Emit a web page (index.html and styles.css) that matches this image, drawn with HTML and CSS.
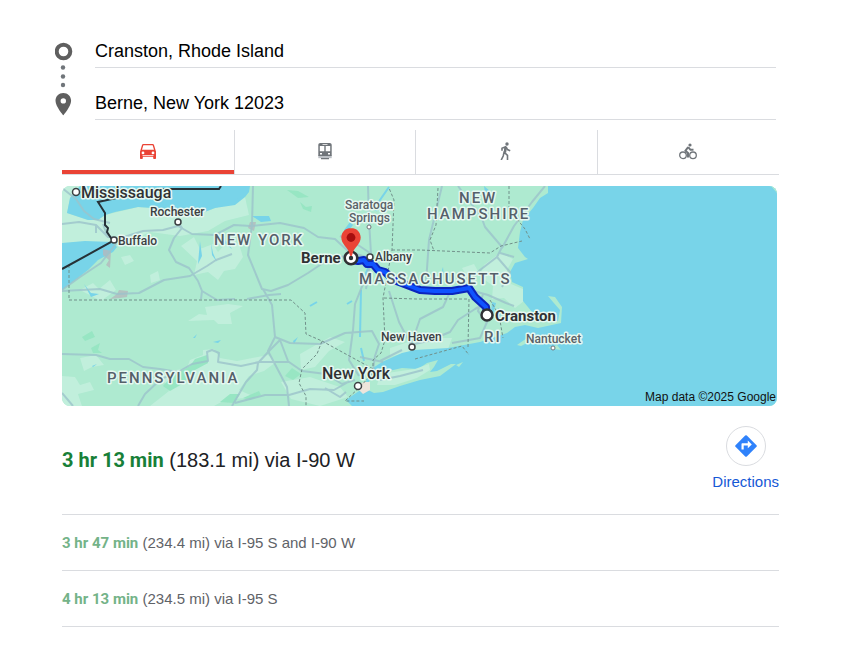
FILE: index.html
```html
<!DOCTYPE html>
<html lang="en">
<head>
<meta charset="utf-8">
<meta name="viewport" content="width=device-width, initial-scale=1">
<title>Directions</title>
<link rel="stylesheet" href="styles.css">
</head>
<body>
<main class="page">
  <form class="places">
    <svg class="trail" width="18" height="76" viewBox="0 0 18 76" aria-hidden="true">
      <circle cx="8.5" cy="9.5" r="6.8" fill="none" stroke="#5f5f5f" stroke-width="4"/>
      <g fill="#70757a"><circle cx="8" cy="25.500" r="2.200"/><circle cx="8" cy="34.500" r="2.200"/><circle cx="8" cy="43" r="2.200"/></g>
      <path fill="#5f5f5f" fill-rule="evenodd" d="M8.300 51C3.900 51 .5 54.400.5 58.700c0 5.600 7.800 14.600 7.800 14.600s7.800-9 7.800-14.600C16.100 54.400 12.700 51 8.300 51zm0 5.200a2.700 2.700 0 1 1 0 5.400 2.700 2.700 0 0 1 0-5.400z"/>
    </svg>
    <div class="fields">
      <input class="place" type="text" aria-label="Starting point" value="Cranston, Rhode Island">
      <input class="place" type="text" aria-label="Destination" value="Berne, New York 12023">
    </div>
  </form>

  <nav class="modes">
    <button class="mode mode-active" type="button" aria-label="Driving">
      <svg width="18" height="18" viewBox="0 0 18 18"><path fill="currentColor" fill-rule="evenodd" d="M4.300 2h9.400c.7 0 1.100.4 1.300 1l1.500 5 .5 1.400V16c0 .6-.4 1-1 1h-.8c-.6 0-1-.4-1-1v-1.300H3.800V16c0 .6-.4 1-1 1H2c-.6 0-1-.4-1-1V9.400L1.500 8 3 3c.2-.6.6-1 1.300-1zm.5 1.300c-.3 0-.5.1-.6.400L3 7.700h12l-1.200-4c-.1-.3-.3-.4-.6-.4zM4 9.500a1.400 1.400 0 1 0 0 2.800 1.400 1.400 0 0 0 0-2.800zm10 0a1.400 1.400 0 1 0 0 2.800 1.400 1.400 0 0 0 0-2.800zM3.500 13v.7h11V13z"/></svg>
    </button>
    <button class="mode" type="button" aria-label="Transit">
      <svg width="18" height="18" viewBox="0 0 18 18"><path fill="#bdc1c6" d="M2.300 13h13.400v3.200H2.300z"/><path fill="currentColor" fill-rule="evenodd" d="M4.300 1h9.400c1.200 0 2 .8 2 2v11H2.300V3c0-1.200.8-2 2-2zM6.500 1.900v.8h5v-.8zM3.800 4v5.300h4.500V4zm5.900 0v5.300h4.500V4zM4 11v1.500h2V11zm8 0v1.500h2V11zM5 16h8v1.200H5z"/></svg>
    </button>
    <button class="mode" type="button" aria-label="Walking">
      <svg width="18" height="18" viewBox="0 0 18 18"><g fill="none" stroke="currentColor" stroke-width="1.600"><path d="M5 8.800V6.200L8.500 4.800 7.500 10.500l3 2.800V18M7.300 9.500 6.200 14 4.200 18M9.200 5.200 10.500 7.600 13.200 8.800"/><path stroke-width="2.500" d="M8.700 5.200 7.900 10.600"/></g><circle cx="10" cy="2" r="1.700" fill="currentColor"/></svg>
    </button>
    <button class="mode" type="button" aria-label="Cycling">
      <svg width="18" height="18" viewBox="0 0 18 18"><g fill="none" stroke="currentColor"><circle cx="4" cy="13.300" r="3.300" stroke-width="1.300"/><circle cx="14" cy="13.300" r="3.300" stroke-width="1.300"/><path stroke-width="2" d="M9.200 5 6.500 8.700 9 11v4.500M9.200 5.200 11.500 7.800h3"/></g><circle cx="11" cy="3" r="1.600" fill="currentColor"/></svg>
    </button>
  </nav>

  <svg class="map" viewBox="62 186 715 220" preserveAspectRatio="xMidYMid slice" role="img" aria-label="Route map">
    <rect class="land" x="62" y="186" width="715" height="220"/>
    <g class="pale">
      <path d="M62 186H80L70 198 67 213 88 220 98 220 105 215 138 207 168 209 185 215 202 213 245 197 249 215 225 221 208 231 180 236 150 232 133 240 112 242 62 243z"/>
      <path d="M181 246 194 237 200 249 213 244 218 252 228 241 239 244 243 257 235 269 224 271 218 280 208 272 194 275 197 261zM205 307 228 304 243 306 230 313 232 324 218 324 214 320 188 321 199 314 207 315zM62 376 75 377 80 385 90 382 94 390 78 394 82 406H62zM80 358 96 355 104 365 92 367 84 371zM161 376 171 371 187 368 190 360 203 355 203 350 214 349 220 358 237 361 268 355 276 362 264 371 249 376 239 390 255 397 225 400 214 406 150 406 169 391zM300 354 330 337 345 342 329 351 315 367 301 370zM281 382 310 377 340 387 348 397 320 406 291 399zM390 348 420 338 452 338 448 349 415 350 390 357z"/>
      <path d="M484 265 500 253 513 259 507 270 511 284 523 289 524 301 515 308 504 298 492 299 493 286 480 276zM462 268 474 264 479 273 468 278z"/>
      <path d="M80 290 93 283 99 289 110 280 116 290 101 301zM121 257 130 255 134 261 125 265zM150 275 158 271 160 280 151 283z"/>
    </g>
    <g class="forest">
      <path d="M82 337 92 331 95 337 85 341zM91 348 100 343 98 350 102 353 93 353zM171 377 190 366 195 359 207 355 208 363 195 370 184 383 170 391 163 386zM220 402 230 394 240 394 234 403zM285 376 292 368 301 374 293 380zM243 398 259 391 261 395 250 400zM287 190 298 191 309 197 298 198zM300 202 306 207 312 206 311 212 303 209z"/>
    </g>
    <g class="water">
      <path d="M70 198 67 213 88 220 98 220 105 215 115 212 138 207 168 209 185 215 202 213 215 208 235 205 245 197 249 192 250 186H80z"/>
      <path d="M62 243 85 241 112 242 117 247 113 252 98 260 88 270 75 280 62 290z"/>
      <path d="M777 186H548V193L540 198 533 208 523 220 520 232 518 248 525 257 528 259 515 263 510 272 512 282 523 287 523 301 532 312 541 322 558 321 560 310 553 302 548 296 555 297 562 307 561 323 538 328 525 325 515 327 507 333 480 342 448 348 415 350 402 353 382 362 373 368 368 375 364 388 356 393 346 400 352 406H777z"/>
      <path d="M252 216 269 216 271 221 261 222zM344 230 350 222 353 225 346 234zM200 241 202 256 198 264zM211 243 213 253 217 262 212 255zM221 236 228 243 232 249 224 243zM84 284 91 293 99 294 91 297zM235 188 244 186 248 192 241 197 235 199zM293 341 298 337 294 344zM193 338 197 334 195 338zM213 342 221 340 218 343zM92 366 97 364 93 367zM443 267 444 278 442 270zM484 186 491 192 492 197 485 193z"/>
      <path d="M492 302 496 303 493 315 491 314zM498 308 501 310 500 319 497 316z"/>
    </g>
    <g class="stream"><path d="M389 187 380 200 376 211M361 290 360 337M361 348 364 361M372 260 365 275 364 282M310 306 317 302M347 304 352 301"/></g>
    <g class="land">
      <path d="M366 389 370 379 380 373 402 368 418 369 427 363 438 360 434 367 430 372 437 371 451 364 456 364 440 376 420 380 400 386 383 392 374 393zM456 365 463 362 459 367zM517 345 527 338 533 340 521 346zM548 348 557 345 561 350zM771 186H777V193z"/>
    </g>
    <path class="pale" d="M377 385 380 374 415 369 429 364 430 370 417 378 395 385z"/>
    <path fill="#eee5dc" d="M357 388 363 382 370 382 370 390 363 394z"/>
    <g fill="#b4b9bd" opacity=".8"><path d="M103 249 111 251 110 268 106 265 109 260 103 255zM110 299 117 294 119 290 128 291 127 297 120 298zM250 222 256 222 254 231 248 228z"/></g>
    <g class="road">
      <path d="M62 224 79 222 96 225 108 237 121 238 143 231 163 230 178 226 192 234 215 235 234 225 251 226 280 223 304 228 318 237 335 239 349 252 370 258"/>
      <path d="M62 188 76 199 84 211 94 219 110 223M62 290 80 277 101 263 111 250 118 241M62 291 100 289 117 294 139 293 164 280 190 276 207 266 216 260 232 254"/>
      <path d="M178 222 182 228 174 238 169 250 176 262 189 268 198 281 202 291 217 300 235 299M247 299 269 295 281 294M253 186 252 225 248 255 262 289 271 291 288 285 308 273 323 263 350 254"/>
      <path d="M263 289 272 305 275 337 268 351 287 387 289 406M275 337 290 343 320 344 345 333 372 331 379 344 375 356 373 370M372 262 363 284 355 304 353 330 349 360 359 376"/>
      <path d="M368 186 369 220 371 254 366 289M370 253 355 243 340 236M62 354 96 355 110 359 129 359 143 367 160 369 178 372 192 364 208 361 207 352 212 350 219 353 218 362 241 366 259 362 289 362 302 371 326 374 342 384 355 380M62 393 73 406M138 406 145 394 161 379 178 372M202 291 201 299M232 406 246 382 257 370 258 363 270 350 280 340 288 361M235 403 265 395 289 395 310 389 334 390 350 381"/>
      <path d="M372 261 393 280 420 290 462 291 480 270 497 257 502 247 485 227 481 216 469 201 458 186M502 248 514 226 532 202 545 186M389 291 399 322 411 345M410 345 428 341 450 332 458 320 475 309 486 303M411 345 420 319 443 307 450 292M402 350 380 361M442 186 429 240 426 283M497 257 510 272 502 287M500 253 514 257M483 294 478 311 487 322 480 338 452 343M470 290 488 295 506 303 514 306"/>
      <path d="M325 388 340 397 346 392M380 380 400 376 423 370M383 362 360 357M96 225 96 233M103 224 107 235"/>
    </g>
    <g class="border">
      <path d="M69 265V300H291L305 313 306 334 322 341 317 354 302 369 299 383 306 396 306 406M322 341 375 370 361 386 345 401 364 401M373 366V360L381 353 385 340 383 298 392 250 394 200 389 188M392 250H420L490 253 501 246 522 241M384 298 417 299 469 299 468 347M438 188 436 225 430 240 434 251M415 359 462 346 469 355M509 186V209M517 219 525 229 530 239M490 300 499 315 503 338"/>
    </g>
    <path class="nation" d="M221 186 219 189H158L98 202 105 213V225L108 228 107 232 113 241 62 269"/>
    <path class="route-edge" d="M352 260 358 261 364 260 367 264 373 264 378 270 385 272 394 280 407 285 420 290 435 291 452 291 469 288 475 297 486 307 487 315"/>
    <path class="route" d="M352 260 358 261 364 260 367 264 373 264 378 270 385 272 394 280 407 285 420 290 435 291 452 291 469 288 475 297 486 307 487 315"/>
    <g class="state">
      <text x="214" y="245">NEW YORK</text>
      <text x="459" y="203">NEW</text>
      <text x="427" y="219">HAMPSHIRE</text>
      <text x="359" y="284">MASSACHUSETTS</text>
      <text x="484" y="342">RI</text>
      <text x="107" y="383">PENNSYLVANIA</text>
    </g>
    <g class="town">
      <text x="150" y="216">Rochester</text>
      <text x="118" y="245">Buffalo</text>
      <text x="375" y="261">Albany</text>
      <text x="381" y="341">New Haven</text>
    </g>
    <g class="town minor">
      <text x="345" y="209">Saratoga</text>
      <text x="349" y="222">Springs</text>
      <text x="526" y="343">Nantucket</text>
    </g>
    <g class="city">
      <text x="81" y="198">Mississauga</text>
      <text x="322" y="379">New York</text>
    </g>
    <g class="stop">
      <text x="301" y="263">Berne</text>
      <text x="495" y="321">Cranston</text>
    </g>
    <g class="dot"><circle cx="76" cy="192" r="3.500"/><circle cx="178" cy="222" r="3"/><circle cx="114" cy="240" r="3"/><circle cx="370" cy="257" r="3"/><circle cx="412" cy="347" r="3"/><circle cx="358" cy="386" r="3.500"/></g>
    <g class="dot dot-small"><circle cx="369" cy="227" r="2"/><circle cx="553" cy="348" r="2"/></g>
    <circle cx="487" cy="315" r="5.500" fill="#fff" stroke="#303134" stroke-width="2.500"/>
    <circle cx="351" cy="258" r="6.300" fill="#fff" stroke="#303134" stroke-width="2.600"/>
    <circle cx="351" cy="258" r="2.200" fill="#303134"/>
    <path fill="#ea4335" d="M351 228c-5.600 0-9.700 4.200-9.700 9.600 0 6.800 6.500 9.400 8.300 16.400.3 1.400.6 2 1.400 2s1.100-.6 1.400-2c1.800-7 8.300-9.600 8.300-16.400 0-5.400-4.100-9.600-9.700-9.600z"/>
    <circle cx="351" cy="237.500" r="4.400" fill="#a50e0e"/>
    <text class="credit" x="776" y="401">Map data ©2025 Google</text>
  </svg>

  <section class="best">
    <p class="best-text"><b>3 hr 13 min</b> (183.1 mi) via I-90 W</p>
    <a class="directions" href="#">
      <span class="round"><svg width="22" height="22" viewBox="0 0 22 22" aria-hidden="true"><path fill="#2f82fb" d="M10.200.5a1.200 1.200 0 0 1 1.600 0l9.700 9.700a1.200 1.200 0 0 1 0 1.600l-9.700 9.700a1.200 1.200 0 0 1-1.600 0L.5 11.800a1.200 1.200 0 0 1 0-1.600z"/><path fill="#fff" d="M6.500 14.500V9.200c0-.6.400-1 1-1h5.300V5.500l4 3.900-4 3.900v-2.900H8.700v4.100z"/></svg></span>
      <span>Directions</span>
    </a>
  </section>
  <ul class="others">
    <li><b>3 hr 47 min</b> (234.4 mi) via I-95 S and I-90 W</li>
    <li><b>4 hr 13 min</b> (234.5 mi) via I-95 S</li>
  </ul>
</main>
</body>
</html>
```
FILE: styles.css
```css
* { box-sizing: border-box; }

body {
  margin: 0;
  background: #fff;
  color: #202124;
  font-family: "Liberation Sans", Arial, sans-serif;
}

.page { padding: 16px 62px 32px; }

.places {
  display: flex;
  gap: 22px;
  margin: 0 3px 10px -7px;
}

.trail { flex: none; margin-top: 26px; }

.fields { flex: 1; min-width: 0; }

.place {
  display: block;
  width: 100%;
  height: 52px;
  padding: 20px 0 0;
  border: 0;
  border-bottom: 1px solid #dadce0;
  outline: 0;
  background: none;
  color: #000;
  font: 18px "Liberation Sans", Arial, sans-serif;
}

.modes {
  display: grid;
  grid-template-columns: 173px 1fr 1fr 1fr;
  height: 45px;
  border-bottom: 1px solid #dadce0;
}

.mode {
  display: flex;
  align-items: center;
  justify-content: center;
  padding: 2px 0 4px;
  border: 0;
  border-right: 1px solid #dadce0;
  background: none;
  color: #70757a;
}

.mode:last-child { border-right: 0; }

.mode-active {
  color: #ea4335;
  box-shadow: inset 0 -4px #ea4335;
  border-right: 0;
  margin-right: 1px;
}

.mode-active + .mode { border-left: 1px solid #dadce0; margin-left: -1px; }

.map {
  display: block;
  width: calc(100% - 2px);
  margin-top: 11px;
  border-radius: 8px;
}

.map text { font-family: Roboto, sans-serif; }
.land { fill: #aeead0; }
.pale { fill: #c1efdc; }
.forest { fill: #98e6c3; }
.water { fill: #78d4e9; }
.stream { fill: none; stroke: #78d4e9; stroke-width: 2; }
.road { fill: none; stroke: #9cc3cb; stroke-width: 2; stroke-linejoin: round; opacity: .8; }
.border { fill: none; stroke: #71908a; stroke-width: 1; stroke-dasharray: 3 2; }
.nation { fill: none; stroke: #263238; stroke-width: 2; }
.route-edge { fill: none; stroke: #0b25bd; stroke-width: 8; stroke-linejoin: round; }
.route { fill: none; stroke: #0f53ff; stroke-width: 4; stroke-linejoin: round; }

.state, .town, .city, .stop {
  stroke: #e6f8f1;
  stroke-width: 3px;
  stroke-linejoin: round;
  paint-order: stroke;
}

.state { fill: #55606a; font-size: 15px; font-weight: 500; letter-spacing: 2px; }
.town { fill: #3c4043; font-size: 12px; font-weight: 500; }
.minor { fill: #5a6268; }
.city { fill: #303134; font-size: 16px; font-weight: 500; }
.stop { fill: #303134; font-size: 15px; font-weight: 700; }
.dot { fill: #fff; stroke: #3c4043; stroke-width: 1.5px; }
.dot-small { stroke: #70757a; stroke-width: 1px; }
.map .credit { fill: #111; font-family: "Liberation Sans", Arial, sans-serif; font-size: 12px; text-anchor: end; }

.best {
  display: flex;
  justify-content: space-between;
  align-items: flex-start;
  min-height: 109px;
  padding-top: 20px;
  border-bottom: 1px solid #dadce0;
}

.best-text { margin: 22px 0 0; font-size: 20px; line-height: 24px; }
b { font-family: Roboto, sans-serif; font-weight: 700; }
.best b { color: #188038; }

.directions {
  display: flex;
  flex-direction: column;
  align-items: center;
  gap: 6px;
  color: #1558d6;
  font-size: 15px;
  line-height: 20px;
  text-decoration: none;
}

.round {
  display: flex;
  align-items: center;
  justify-content: center;
  width: 40px;
  height: 40px;
  border: 1px solid #dadce0;
  border-radius: 50%;
}

.others { margin: 0; padding: 0; list-style: none; }

.others li {
  padding: 18px 0 17px;
  border-bottom: 1px solid #dadce0;
  color: #5f6368;
  font-size: 15px;
  line-height: 20px;
}

.others b { color: #74b388; }
```
